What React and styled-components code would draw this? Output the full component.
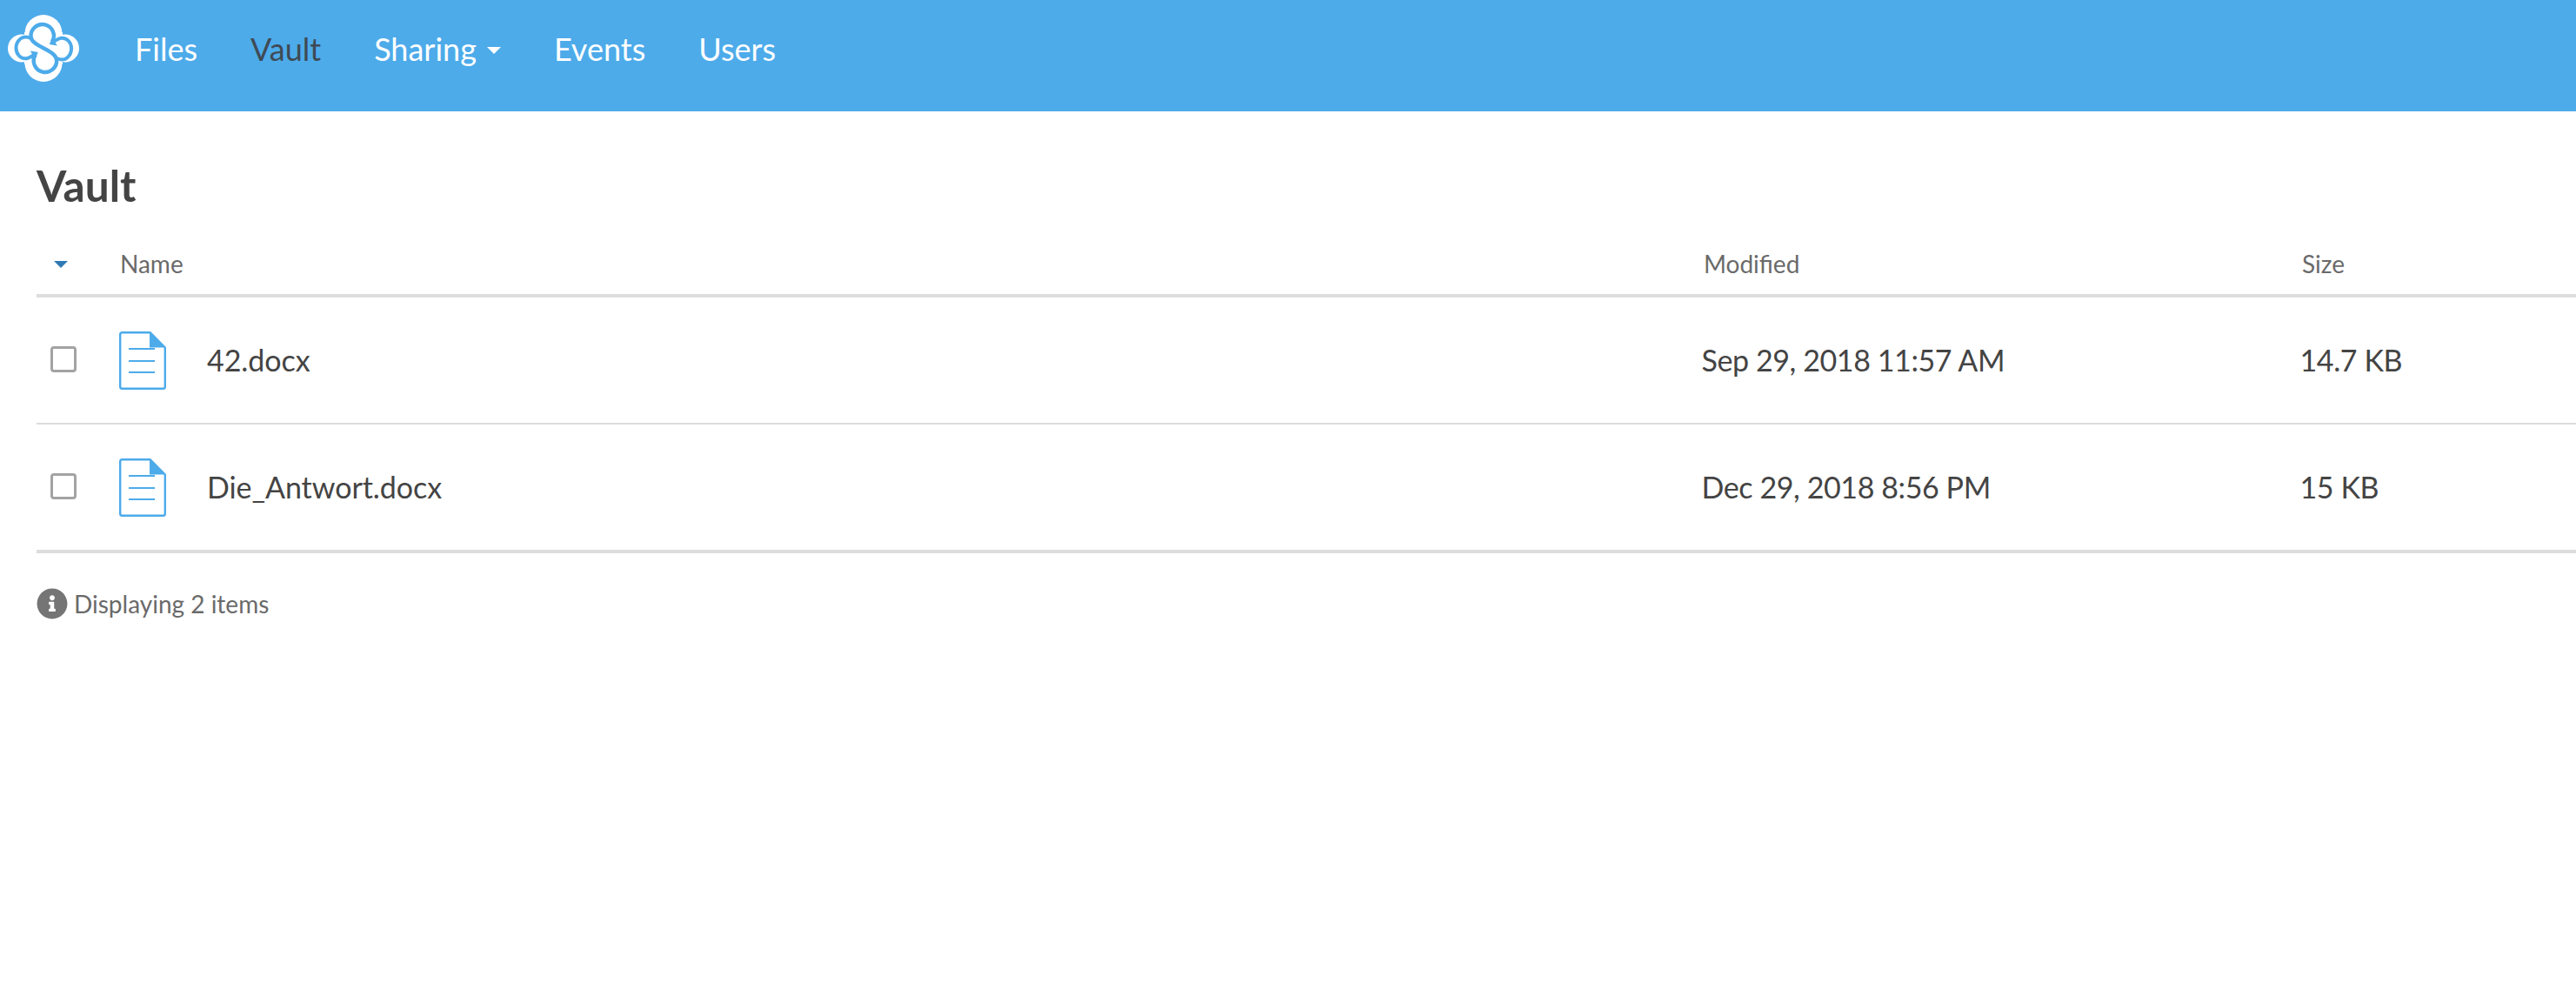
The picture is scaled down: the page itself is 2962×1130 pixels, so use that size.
import React from "react";
import styled, { createGlobalStyle } from "styled-components";
import { FaInfoCircle } from "react-icons/fa";

const Global = createGlobalStyle`
  html, body { margin: 0; padding: 0; background: #fff; }
  body { font-family: Lato, "Open Sans", sans-serif; color: #444; }
`;

const Header = styled.header`
  display: flex;
  align-items: flex-start;
  height: 128px;
  background: #4dabea;
`;
const LogoLink = styled.a`
  display: block;
  margin: 17px 0 0 9px;
  width: 82px;
  height: 78px;
  flex: none;
`;
const Nav = styled.nav`
  display: flex;
  margin: 34px 0 0 34px;
`;
const NavItem = styled.a`
  display: flex;
  align-items: center;
  padding: 0 30.5px;
  height: 44px;
  font-size: 36px;
  line-height: 44px;
  color: ${(p) => (p.$active ? "#3f4a55" : "#fff")};
  &:first-child { padding-left: 30px; }
`;
const NavCaret = styled.span`
  margin-left: 12px;
  margin-top: 4px;
  border-left: 8px solid transparent;
  border-right: 8px solid transparent;
  border-top: 8px solid #fff;
`;

const Main = styled.main`
  padding: 0 0 0 42px;
`;
const Title = styled.h1`
  margin: 0;
  padding-top: 56px;
  height: 58px;
  font-size: 49.5px;
  line-height: 58px;
  font-weight: 700;
  color: #444;
`;
const gridCols = "95px 101px 1fr 688px 316px";
const HeadRow = styled.div`
  display: grid;
  grid-template-columns: ${gridCols};
  align-items: center;
  margin-top: 34px;
  padding-bottom: 9px;
  height: 53px;
  border-bottom: 4px solid #ddd;
  font-size: 28px;
  color: #6a6a6a;
`;
const SortCaret = styled.span`
  justify-self: start;
  margin-left: 20px;
  margin-top: 3px;
  border-left: 8px solid transparent;
  border-right: 8px solid transparent;
  border-top: 8px solid #2f7ab5;
`;
const HeadName = styled.div`
  grid-column: 2 / span 2;
  padding-left: 1px;
`;
const HeadCell = styled.div`
  padding-left: 1px;
`;
const Row = styled.div`
  display: grid;
  grid-template-columns: ${gridCols};
  align-items: center;
  height: 144px;
  border-bottom: ${(p) => (p.$last ? "4px" : "2px")} solid #ddd;
  font-size: 34px;
  color: #444;
`;
const Check = styled.span`
  display: block;
  box-sizing: border-box;
  width: 30px;
  height: 30px;
  margin: -2px 0 0 16px;
  border: 3px solid #a3a3a3;
  border-radius: 4px;
`;
const DocIconWrap = styled.span`
  display: block;
  width: 54px;
  height: 67px;
`;
const NameCell = styled.div`
  margin-top: -2px;
  letter-spacing: -0.05px;
`;
const DataCell = styled.div`
  margin: -2px 0 0 -1.5px;
  letter-spacing: -0.4px;
`;
const Footer = styled.div`
  display: flex;
  align-items: center;
  gap: 7px;
  margin-top: 40px;
  height: 36px;
  font-size: 28px;
  color: #6a6a6a;
  svg { display: block; color: #757575; }
`;

const S_BLUE = "#4dabea";

const LogoHalf = () => (
  <>
    <path
      d="M35.5 35 C31 33 26.5 33 23.5 35.5 C20 38.5 18.5 42 18.5 46.3 C18.5 53 23.5 58.8 30 58.3 C33 58 36 56 40 53.5"
      fill="none"
      stroke={S_BLUE}
      strokeWidth="4"
    />
    <path d="M34.8 49.5 L43.8 51 L40.5 59 Z" fill={S_BLUE} />
  </>
);

const Logo = () => (
  <svg viewBox="9 8 82 78" width="82" height="78" aria-hidden="true">
    <g fill="#fff">
      <circle cx="50" cy="29.5" r="21.5" />
      <circle cx="50" cy="63.5" r="21.5" />
      <circle cx="25" cy="46.5" r="16" />
      <circle cx="75" cy="46.5" r="16" />
      <rect x="28" y="28" width="44" height="37" />
    </g>
    <path
      d="M60 39 A13.2 13.2 0 1 0 35.5 33 C36 45 64.5 48 65.1 60 A13.2 13.2 0 1 1 40.6 54"
      fill="none"
      stroke={S_BLUE}
      strokeWidth="4.4"
    />
    <LogoHalf />
    <g transform="rotate(180 50.3 46.5)">
      <LogoHalf />
    </g>
  </svg>
);

const DocIcon = () => (
  <svg viewBox="0 0 54 67" width="54" height="67" aria-hidden="true">
    <path
      d="M35.5 1.2 H3.5 A2.3 2.3 0 0 0 1.2 3.5 V63.5 A2.3 2.3 0 0 0 3.5 65.8 H50.5 A2.3 2.3 0 0 0 52.8 63.5 V18.5 Z"
      fill="#fff"
      stroke="#4dabea"
      strokeWidth="2.4"
      strokeLinejoin="round"
    />
    <path d="M35 1 L53 18.5 H35 Z" fill="#4dabea" />
    <path d="M11 20 H41 M11 34 H41 M11 47 H41" stroke="#4dabea" strokeWidth="2.2" fill="none" />
  </svg>
);

const files = [
  { name: "42.docx", modified: "Sep 29, 2018 11:57 AM", size: "14.7 KB" },
  { name: "Die_Antwort.docx", modified: "Dec 29, 2018 8:56 PM", size: "15 KB" },
];

export default function App() {
  return (
    <>
      <Global />
      <Header>
        <LogoLink><Logo /></LogoLink>
        <Nav>
          <NavItem>Files</NavItem>
          <NavItem $active>Vault</NavItem>
          <NavItem>Sharing<NavCaret /></NavItem>
          <NavItem>Events</NavItem>
          <NavItem>Users</NavItem>
        </Nav>
      </Header>
      <Main>
        <Title>Vault</Title>
        <HeadRow>
          <SortCaret />
          <HeadName>Name</HeadName>
          <HeadCell>Modified</HeadCell>
          <HeadCell>Size</HeadCell>
        </HeadRow>
        {files.map((f, i) => (
          <Row key={f.name} $last={i === files.length - 1}>
            <Check />
            <DocIconWrap><DocIcon /></DocIconWrap>
            <NameCell>{f.name}</NameCell>
            <DataCell>{f.modified}</DataCell>
            <DataCell>{f.size}</DataCell>
          </Row>
        ))}
        <Footer>
          <FaInfoCircle size={36} />
          <span>Displaying 2 items</span>
        </Footer>
      </Main>
    </>
  );
}
